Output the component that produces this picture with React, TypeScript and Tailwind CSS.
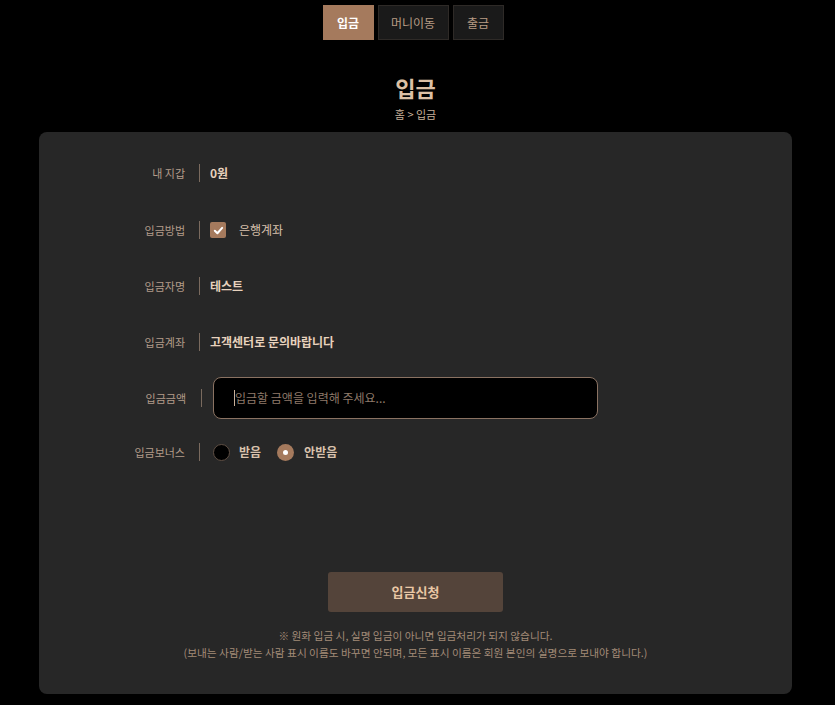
import React from "react";

const font = { fontFamily: '"Noto Sans CJK KR", "Noto Sans", sans-serif' };

function Row({ label, children, className = "" }: { label: string; children: React.ReactNode; className?: string }) {
  return (
    <div className={`flex items-center ${className}`}>
      <div className="w-[146px] text-right text-[11px] text-[#b39c8a]">{label}</div>
      <div className="ml-[14px] h-[18px] w-px bg-[#7a6a5e]" />
      <div className="ml-[10px] flex items-center">{children}</div>
    </div>
  );
}

export default function App() {
  return (
    <div className="min-h-[705px] w-[835px] bg-black" style={font}>
      <div className="w-[831px]">
        <div className="flex w-[826px] justify-center gap-[4px] pt-[5px]">
          <div className="flex h-[35px] w-[51px] items-center justify-center bg-[#a57a5d] text-[12px] font-bold text-white">입금</div>
          <div className="flex h-[35px] w-[71px] items-center justify-center border border-[#2e2a27] bg-[#1a1a1a] text-[12px] text-[#b89c84]">머니이동</div>
          <div className="flex h-[35px] w-[51px] items-center justify-center border border-[#2e2a27] bg-[#1a1a1a] text-[12px] text-[#b89c84]">출금</div>
        </div>
        <div className="mt-[33px] text-center text-[22px] font-bold leading-[28px] text-[#dcc0a5]">입금</div>
        <div className="mt-[6px] text-center text-[11px] leading-[14px] text-[#c8b09a]">홈 &gt; 입금</div>
        <div className="mx-[39px] mt-[11px] h-[562px] rounded-[8px] bg-[#272727] pt-[31px]">
          <Row label="내 지갑" className="h-[20px]">
            <span className="text-[12px] font-bold text-[#e8d2bd]">0원</span>
          </Row>
          <Row label="입금방법" className="mt-[37px] h-[20px]">
            <span className="flex h-[16px] w-[16px] items-center justify-center rounded-[2px] bg-[#a57a5d]">
              <svg width="11" height="11" viewBox="0 0 12 12"><path d="M2 6.3 L4.8 9 L10 3.2" stroke="white" strokeWidth="2.2" fill="none" strokeLinecap="round" strokeLinejoin="round" /></svg>
            </span>
            <span className="ml-[13px] text-[12px] text-[#d9c2ad]">은행계좌</span>
          </Row>
          <Row label="입금자명" className="mt-[36px] h-[20px]">
            <span className="text-[12px] font-bold text-[#e8d2bd]">테스트</span>
          </Row>
          <Row label="입금계좌" className="mt-[36px] h-[20px]">
            <span className="text-[12px] font-bold text-[#e8d2bd]">고객센터로 문의바랍니다</span>
          </Row>
          <div className="mt-[25px] flex h-[42px] items-center">
            <div className="w-[147px] text-right text-[11px] text-[#b39c8a]">입금금액</div>
            <div className="ml-[15px] h-[18px] w-px bg-[#7a6a5e]" />
            <div className="ml-[11px] flex h-[42px] w-[385px] items-center rounded-[8px] border border-[#8a7262] bg-black pl-[20px]">
              <span className="h-[16px] w-px bg-[#c8b09a]" />
              <span className="text-[12px] text-[#8f7a6a]">입금할 금액을 입력해 주세요...</span>
            </div>
          </div>
          <Row label="입금보너스" className="mt-[23px] h-[20px]">
            <span className="ml-[3px] h-[17px] w-[17px] rounded-full border border-[#5f4f44] bg-black" />
            <span className="ml-[9px] text-[12px] font-bold text-[#d9c2ad]">받음</span>
            <span className="ml-[16px] flex h-[17px] w-[17px] items-center justify-center rounded-full bg-[#a57a5d]">
              <span className="h-[5px] w-[5px] rounded-full bg-white" />
            </span>
            <span className="ml-[10px] text-[12px] font-bold text-[#d9c2ad]">안받음</span>
          </Row>
          <div className="mt-[110px] flex justify-center">
            <div className="flex h-[40px] w-[175px] items-center justify-center rounded-[3px] bg-[#54443a] text-[13px] font-bold text-[#eac8a6]">입금신청</div>
          </div>
          <div className="mt-[15px] text-center text-[10.7px] leading-[17px] text-[#a38b78]">
            <div>※ 원화 입금 시, 실명 입금이 아니면 입금처리가 되지 않습니다.</div>
            <div>(보내는 사람/받는 사람 표시 이름도 바꾸면 안되며, 모든 표시 이름은 회원 본인의 실명으로 보내야 합니다.)</div>
          </div>
        </div>
      </div>
    </div>
  );
}
